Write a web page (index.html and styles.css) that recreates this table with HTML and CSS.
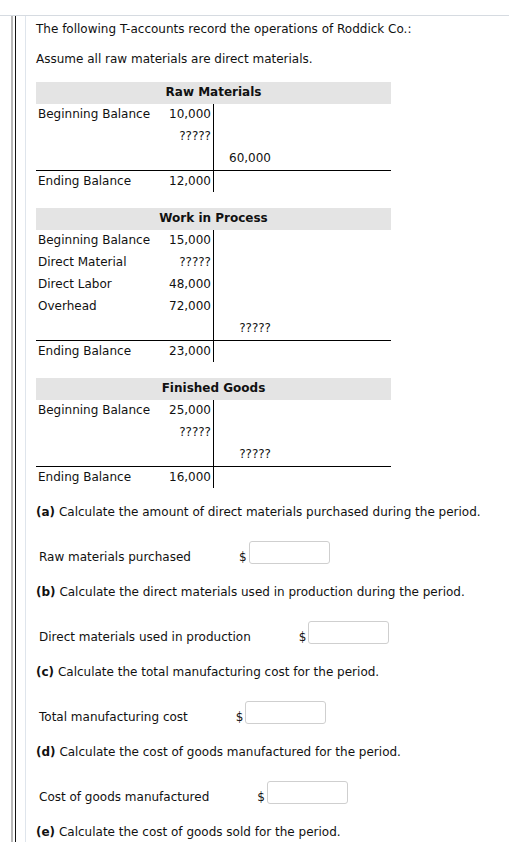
FILE: index.html
```html
<!DOCTYPE html>
<html>
<head>
<meta charset="utf-8">
<link rel="stylesheet" href="styles.css">
</head>
<body>
<div class="page">
  <div class="rail-grey">
    <div class="rail-dark">
      <div class="content">
        <p class="intro">The following T-accounts record the operations of Roddick Co.:</p>
        <p class="intro second">Assume all raw materials are direct materials.</p>

        <div class="taccount">
          <div class="t-head">Raw Materials</div>
          <div class="t-body">
            <div class="lbl">Beginning Balance</div><div class="dr">10,000</div><div class="cr"></div><div class="sp"></div>
            <div class="lbl"></div><div class="dr">?????</div><div class="cr"></div><div class="sp"></div>
            <div class="lbl"></div><div class="dr"></div><div class="cr">60,000</div><div class="sp"></div>
            <div class="lbl end">Ending Balance</div><div class="dr end">12,000</div><div class="cr end"></div><div class="sp end"></div>
          </div>
        </div>

        <div class="taccount">
          <div class="t-head">Work in Process</div>
          <div class="t-body">
            <div class="lbl">Beginning Balance</div><div class="dr">15,000</div><div class="cr"></div><div class="sp"></div>
            <div class="lbl">Direct Material</div><div class="dr">?????</div><div class="cr"></div><div class="sp"></div>
            <div class="lbl">Direct Labor</div><div class="dr">48,000</div><div class="cr"></div><div class="sp"></div>
            <div class="lbl">Overhead</div><div class="dr">72,000</div><div class="cr"></div><div class="sp"></div>
            <div class="lbl"></div><div class="dr"></div><div class="cr">?????</div><div class="sp"></div>
            <div class="lbl end">Ending Balance</div><div class="dr end">23,000</div><div class="cr end"></div><div class="sp end"></div>
          </div>
        </div>

        <div class="taccount">
          <div class="t-head">Finished Goods</div>
          <div class="t-body">
            <div class="lbl">Beginning Balance</div><div class="dr">25,000</div><div class="cr"></div><div class="sp"></div>
            <div class="lbl"></div><div class="dr">?????</div><div class="cr"></div><div class="sp"></div>
            <div class="lbl"></div><div class="dr"></div><div class="cr">?????</div><div class="sp"></div>
            <div class="lbl end">Ending Balance</div><div class="dr end">16,000</div><div class="cr end"></div><div class="sp end"></div>
          </div>
        </div>

        <div class="question">
          <p class="q"><b>(a)</b> Calculate the amount of direct materials purchased during the period.</p>
          <div class="answer"><span class="a-label">Raw materials purchased</span><span class="dollar">$</span><input class="box" type="text"></div>
        </div>
        <div class="question">
          <p class="q"><b>(b)</b> Calculate the direct materials used in production during the period.</p>
          <div class="answer"><span class="a-label">Direct materials used in production</span><span class="dollar">$</span><input class="box" type="text"></div>
        </div>
        <div class="question">
          <p class="q"><b>(c)</b> Calculate the total manufacturing cost for the period.</p>
          <div class="answer"><span class="a-label">Total manufacturing cost</span><span class="dollar">$</span><input class="box" type="text"></div>
        </div>
        <div class="question">
          <p class="q"><b>(d)</b> Calculate the cost of goods manufactured for the period.</p>
          <div class="answer"><span class="a-label">Cost of goods manufactured</span><span class="dollar">$</span><input class="box" type="text"></div>
        </div>
        <div class="question">
          <p class="q"><b>(e)</b> Calculate the cost of goods sold for the period.</p>
        </div>
      </div>
    </div>
  </div>
</div>
</body>
</html>
```

FILE: styles.css
```css
html, body {
  margin: 0;
  padding: 0;
  background: #fff;
}
body {
  font-family: "DejaVu Sans", Verdana, sans-serif;
  font-size: 12px;
  color: #111;
  height: 100vh;
  overflow: hidden;
}
.page {
  box-sizing: border-box;
  margin-top: 15px;
  border-top: 1px solid #d6dbe1;
  height: calc(100vh - 15px);
  overflow: hidden;
}
.rail-grey {
  margin-left: 11px;
  border-left: 2px solid #b8b8b8;
  padding-left: 2px;
  height: 100%;
}
.rail-dark {
  border-left: 1px solid #111;
  padding-left: 9px;
  height: 100%;
}
.content {
  border-left: 1px solid #dfe5ec;
  padding-left: 10px;
  padding-top: 5px;
  height: 100%;
  box-sizing: border-box;
}
.intro {
  margin: 0;
  line-height: 16px;
}
.intro.second {
  margin-top: 14px;
  margin-bottom: 15px;
}
.taccount {
  width: 355px;
  margin-bottom: 16px;
}
.t-head {
  background: #e4e4e4;
  height: 22px;
  line-height: 21px;
  font-weight: bold;
  text-align: center;
}
.t-body {
  display: grid;
  grid-template-columns: 120px 58px 59px 1fr;
  grid-auto-rows: 22px;
}
.t-body > div {
  line-height: 20px;
  white-space: nowrap;
}
.lbl {
  padding-left: 2px;
}
.dr {
  text-align: right;
  padding-right: 2px;
  border-right: 1px solid #000;
}
.cr {
  text-align: right;
  padding-right: 2px;
}
.end {
  border-top: 1px solid #000;
}
.q {
  margin: 15px 0 0 0;
  line-height: 16px;
}
.question + .question .q {
  margin-top: 0;
}
.answer {
  display: flex;
  align-items: flex-end;
  margin-top: 21px;
  margin-bottom: 20px;
  padding-left: 3px;
}
.a-label {
  line-height: 13px;
  margin-right: 48px;
}
.dollar {
  line-height: 13px;
  margin-right: 2px;
}
.box {
  width: 81px;
  height: 23px;
  box-sizing: border-box;
  border: 1px solid #cfcfcf;
  border-radius: 3px;
  margin: 0;
  padding: 0;
  background: #fff;
}
```
